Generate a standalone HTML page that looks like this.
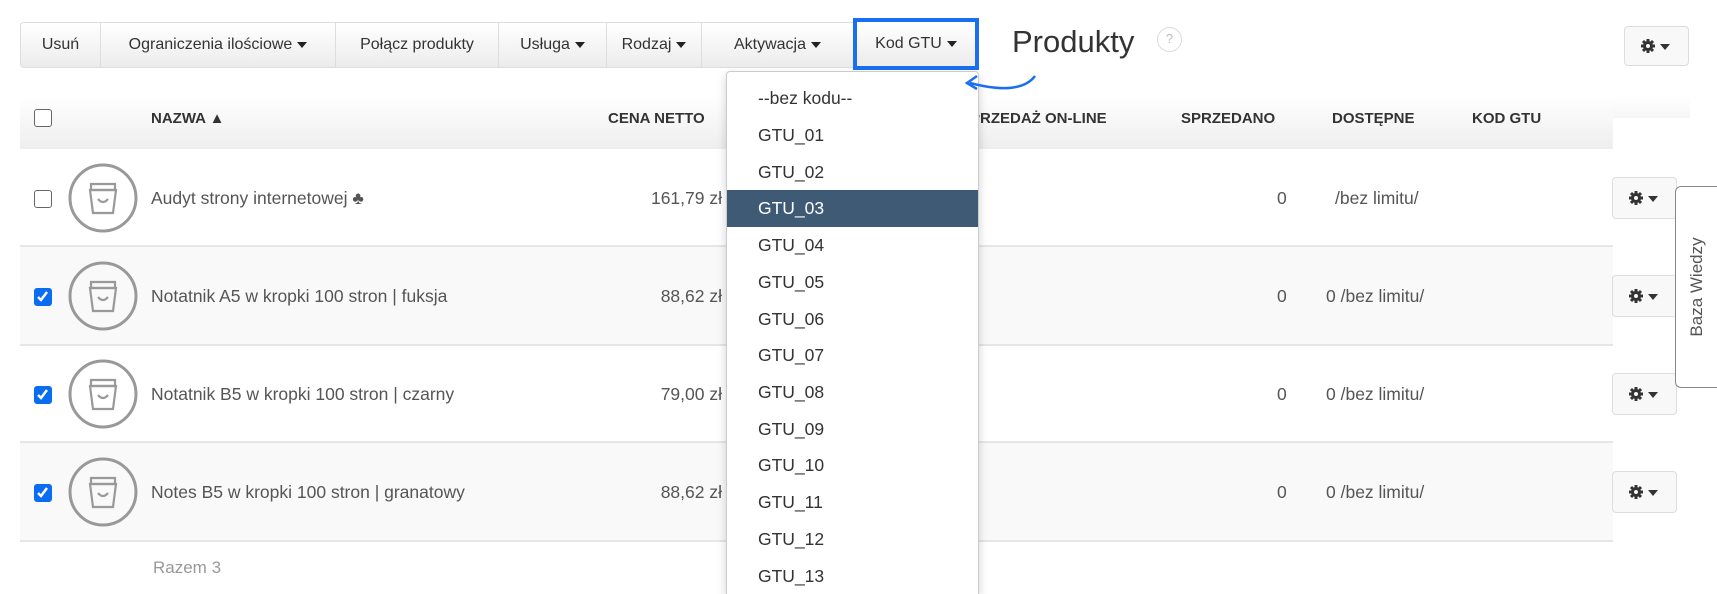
<!DOCTYPE html>
<html><head><meta charset="utf-8"><style>
*{box-sizing:border-box;margin:0;padding:0}
html,body{width:1717px;height:594px;overflow:hidden}
body{background:#fff;font-family:"Liberation Sans",Arial,sans-serif;color:#555;position:relative}
.abs{position:absolute}
.tb{position:absolute;top:22px;height:46px;border:1px solid #ddd;border-right:none;background:linear-gradient(#fff,#ececec);font-size:16px;color:#333;display:flex;align-items:center;justify-content:center;white-space:nowrap}
.car{display:inline-block;width:0;height:0;border-left:5px solid transparent;border-right:5px solid transparent;border-top:6px solid #222;margin-left:5px;vertical-align:middle}
.hd{position:absolute;top:110px;font-size:15px;font-weight:bold;color:#333}
.row{position:absolute;left:20px;width:1593px;border-bottom:2px solid #e6e6e6}
.cb{position:absolute;left:34px;width:18px;height:18px;border:1.5px solid #666;border-radius:3px;background:#fff}
.cb.on{background:#0a6cf0;border-color:#0a6cf0}
.nm{position:absolute;left:151px;font-size:17.5px;color:#555}
.pr{position:absolute;right:995px;font-size:17.5px;color:#555}
.sp{position:absolute;left:1277px;font-size:17.5px}
.ds{position:absolute;font-size:17.5px}
.gb{position:absolute;left:1612px;width:65px;height:42px;border:1px solid #ddd;border-radius:4px;background:#f8f8f8;display:flex;align-items:center;justify-content:center}
.dd{position:absolute;left:726px;top:71px;width:253px;height:523px;background:#fff;border:1px solid #ccc;border-bottom:none;border-radius:4px 4px 0 0;box-shadow:0 4px 10px rgba(0,0,0,.18);overflow:hidden}
.it{position:absolute;left:0;width:251px;height:37px;line-height:37px;padding-left:31px;font-size:17.5px;color:#333}
</style></head><body>
<div class="tb" style="left:20px;width:80px;border-radius:4px 0 0 4px">Usuń</div>
<div class="tb" style="left:100px;width:235px">Ograniczenia ilościowe<span class="car"></span></div>
<div class="tb" style="left:335px;width:163px">Połącz produkty</div>
<div class="tb" style="left:498px;width:108px">Usługa<span class="car"></span></div>
<div class="tb" style="left:606px;width:95px">Rodzaj<span class="car"></span></div>
<div class="tb" style="left:701px;width:152px">Aktywacja<span class="car"></span></div>
<div class="tb" style="left:853px;width:126px;border:4px solid #1a6ff0;top:18px;height:52px">Kod GTU<span class="car"></span></div>
<div class="abs" style="left:1012px;top:24px;font-size:31px;color:#333">Produkty</div>
<div class="abs" style="left:1157px;top:27px;width:25px;height:25px;border:1.5px solid #ddd;border-radius:50%;font-size:13px;color:#bbb;text-align:center;line-height:22px">?</div>
<div class="gb" style="left:1624px;top:26px;height:40px;width:65px"><svg width="34" height="16" viewBox="0 0 34 16"><g fill="#333"><circle cx="8" cy="8" r="5"/><g stroke="#333" stroke-width="3"><line x1="8" y1="1" x2="8" y2="15"/><line x1="1" y1="8" x2="15" y2="8"/><line x1="3" y1="3" x2="13" y2="13"/><line x1="13" y1="3" x2="3" y2="13"/></g><circle cx="8" cy="8" r="2" fill="#f8f8f8"/><path d="M20 6h10l-5 6z"/></g></svg></div>
<div class="abs" style="left:20px;top:96px;width:1593px;height:53px;background:linear-gradient(#fff,#eee)"></div>
<div class="abs" style="left:1613px;top:96px;width:77px;height:22px;background:linear-gradient(#fff,#f6f6f6)"></div>
<div class="cb" style="top:109px"></div>
<div class="hd" style="left:151px">NAZWA ▲</div>
<div class="hd" style="left:608px">CENA NETTO</div>
<div class="hd" style="left:960px">SPRZEDAŻ ON-LINE</div>
<div class="hd" style="left:1181px">SPRZEDANO</div>
<div class="hd" style="left:1332px">DOSTĘPNE</div>
<div class="hd" style="left:1472px">KOD GTU</div>

<div class="row" style="top:149px;height:98px;background:#fff"></div>
<div class="row" style="top:247px;height:99px;background:#f9f9f9"></div>
<div class="row" style="top:346px;height:97px;background:#fff"></div>
<div class="row" style="top:443px;height:99px;background:#f9f9f9"></div>

<div class="cb" style="top:190px"></div>
<div class="cb on" style="top:288px"><svg width="15" height="15" viewBox="0 0 15 15"><path d="M3 8l3 3 6-8" fill="none" stroke="#fff" stroke-width="2.5"/></svg></div>
<div class="cb on" style="top:386px"><svg width="15" height="15" viewBox="0 0 15 15"><path d="M3 8l3 3 6-8" fill="none" stroke="#fff" stroke-width="2.5"/></svg></div>
<div class="cb on" style="top:484px"><svg width="15" height="15" viewBox="0 0 15 15"><path d="M3 8l3 3 6-8" fill="none" stroke="#fff" stroke-width="2.5"/></svg></div>

<svg class="abs" style="left:0;top:0" width="200" height="594">
<g fill="none" stroke="#999" stroke-width="3">
<circle cx="103" cy="198" r="33"/><circle cx="103" cy="296" r="33"/><circle cx="103" cy="394" r="33"/><circle cx="103" cy="492" r="33"/>
</g>
<g fill="none" stroke="#999" stroke-width="2.2">
<g id="b"><path d="M90 190h26l-3 23h-20z"/><path d="M91 184h24v6h-24z"/><path d="M98 199q5 6 10 0"/></g>
<use href="#b" y="98"/><use href="#b" y="196"/><use href="#b" y="294"/>
</g></svg>

<div class="nm" style="top:188px">Audyt strony internetowej ♣</div>
<div class="nm" style="top:286px">Notatnik A5 w kropki 100 stron | fuksja</div>
<div class="nm" style="top:384px">Notatnik B5 w kropki 100 stron | czarny</div>
<div class="nm" style="top:482px">Notes B5 w kropki 100 stron | granatowy</div>
<div class="pr" style="top:188px">161,79 zł</div>
<div class="pr" style="top:286px">88,62 zł</div>
<div class="pr" style="top:384px">79,00 zł</div>
<div class="pr" style="top:482px">88,62 zł</div>
<div class="sp" style="top:188px">0</div><div class="sp" style="top:286px">0</div><div class="sp" style="top:384px">0</div><div class="sp" style="top:482px">0</div>
<div class="ds" style="left:1335px;top:188px">/bez limitu/</div>
<div class="ds" style="left:1326px;top:286px">0 /bez limitu/</div>
<div class="ds" style="left:1326px;top:384px">0 /bez limitu/</div>
<div class="ds" style="left:1326px;top:482px">0 /bez limitu/</div>
<div class="abs" style="left:153px;top:558px;font-size:17px;color:#999">Razem 3</div>

<div class="gb" style="top:177px"><svg width="34" height="16" viewBox="0 0 34 16"><g fill="#333"><circle cx="8" cy="8" r="5"/><g stroke="#333" stroke-width="3"><line x1="8" y1="1" x2="8" y2="15"/><line x1="1" y1="8" x2="15" y2="8"/><line x1="3" y1="3" x2="13" y2="13"/><line x1="13" y1="3" x2="3" y2="13"/></g><circle cx="8" cy="8" r="2" fill="#f8f8f8"/><path d="M20 6h10l-5 6z"/></g></svg></div>
<div class="gb" style="top:275px"><svg width="34" height="16" viewBox="0 0 34 16"><g fill="#333"><circle cx="8" cy="8" r="5"/><g stroke="#333" stroke-width="3"><line x1="8" y1="1" x2="8" y2="15"/><line x1="1" y1="8" x2="15" y2="8"/><line x1="3" y1="3" x2="13" y2="13"/><line x1="13" y1="3" x2="3" y2="13"/></g><circle cx="8" cy="8" r="2" fill="#f8f8f8"/><path d="M20 6h10l-5 6z"/></g></svg></div>
<div class="gb" style="top:373px"><svg width="34" height="16" viewBox="0 0 34 16"><g fill="#333"><circle cx="8" cy="8" r="5"/><g stroke="#333" stroke-width="3"><line x1="8" y1="1" x2="8" y2="15"/><line x1="1" y1="8" x2="15" y2="8"/><line x1="3" y1="3" x2="13" y2="13"/><line x1="13" y1="3" x2="3" y2="13"/></g><circle cx="8" cy="8" r="2" fill="#f8f8f8"/><path d="M20 6h10l-5 6z"/></g></svg></div>
<div class="gb" style="top:471px"><svg width="34" height="16" viewBox="0 0 34 16"><g fill="#333"><circle cx="8" cy="8" r="5"/><g stroke="#333" stroke-width="3"><line x1="8" y1="1" x2="8" y2="15"/><line x1="1" y1="8" x2="15" y2="8"/><line x1="3" y1="3" x2="13" y2="13"/><line x1="13" y1="3" x2="3" y2="13"/></g><circle cx="8" cy="8" r="2" fill="#f8f8f8"/><path d="M20 6h10l-5 6z"/></g></svg></div>

<div class="abs" style="left:1675px;top:186px;width:42px;height:202px;border:1.5px solid #888;border-right:none;border-radius:6px 0 0 6px;background:#fff"></div>
<div class="abs" style="left:1685px;top:287px;width:0;height:0"><div style="transform:translate(-50%,-50%) rotate(-90deg);position:absolute;left:12px;top:0;white-space:nowrap;font-size:17px;color:#555">Baza Wiedzy</div></div>

<div class="dd">
<div class="it" style="top:8px">--bez kodu--</div>
<div class="it" style="top:45px">GTU_01</div>
<div class="it" style="top:82px">GTU_02</div>
<div class="it" style="top:118px;background:#3e5a75;color:#fff">GTU_03</div>
<div class="it" style="top:155px">GTU_04</div>
<div class="it" style="top:192px">GTU_05</div>
<div class="it" style="top:229px">GTU_06</div>
<div class="it" style="top:265px">GTU_07</div>
<div class="it" style="top:302px">GTU_08</div>
<div class="it" style="top:339px">GTU_09</div>
<div class="it" style="top:375px">GTU_10</div>
<div class="it" style="top:412px">GTU_11</div>
<div class="it" style="top:449px">GTU_12</div>
<div class="it" style="top:486px">GTU_13</div>
</div>
<svg class="abs" style="left:958px;top:68px;z-index:5" width="84" height="30"><path d="M77 8 Q62 28 12 15" fill="none" stroke="#1a6ff0" stroke-width="2.5"/><path d="M19 8 L9 15 L19 21" fill="none" stroke="#1a6ff0" stroke-width="2.5"/></svg>
</body></html>
